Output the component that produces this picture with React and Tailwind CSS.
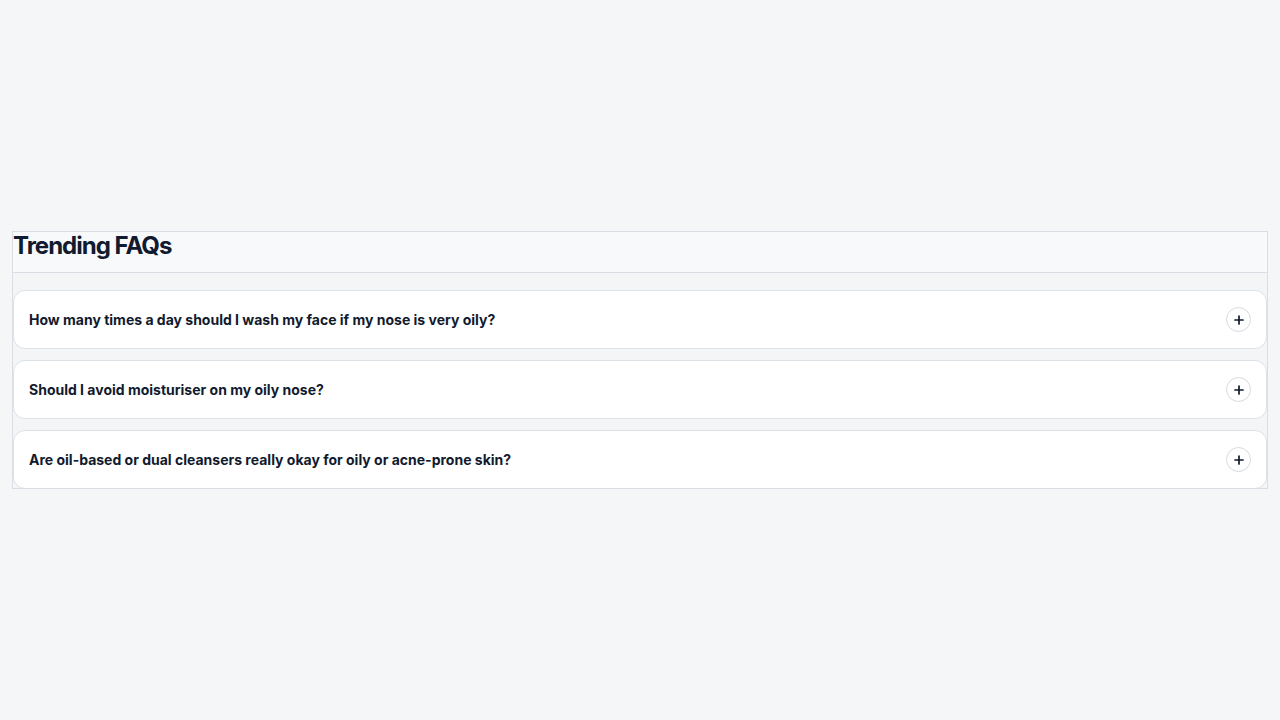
import React from "react";

const faqs = [
  "How many times a day should I wash my face if my nose is very oily?",
  "Should I avoid moisturiser on my oily nose?",
  "Are oil-based or dual cleansers really okay for oily or acne-prone skin?",
];

const PlusIcon = () => (
  <svg width="10" height="10" viewBox="0 0 10 10" fill="none">
    <path d="M5 1v8M1 5h8" stroke="#111827" strokeWidth="1.7" strokeLinecap="round" />
  </svg>
);

const FaqItem = ({ question }) => (
  <div className="flex h-[59px] shrink-0 items-center justify-between rounded-xl border border-[#dde2e7] bg-white pl-[15px] pr-[15px]">
    <span className="text-[14px] font-bold text-[#111a2e]">{question}</span>
    <button className="flex h-[25px] w-[25px] items-center justify-center rounded-full border border-[#d5dbe1] bg-white">
      <PlusIcon />
    </button>
  </div>
);

const TrendingFaqs = () => (
  <section className="flex h-[258px] flex-col overflow-hidden border border-[#d9dee4] bg-[#f3f5f7]">
    <div className="h-[41px] shrink-0 border-b border-[#d9dee4] bg-[#f8f9fb]">
      <h2 className="text-[24px] font-bold leading-7 tracking-[-1px] text-[#111a2e]">Trending FAQs</h2>
    </div>
    <div className="flex flex-col gap-[11px] pt-[17px]">
      {faqs.map((q, i) => (
        <FaqItem key={i} question={q} />
      ))}
    </div>
  </section>
);

export default function App() {
  return (
    <div
      className="flex min-h-[720px] flex-col justify-center bg-[#f4f6f8] px-3"
      style={{ fontFamily: "Inter, 'Noto Sans', sans-serif" }}
    >
      <TrendingFaqs />
    </div>
  );
}
